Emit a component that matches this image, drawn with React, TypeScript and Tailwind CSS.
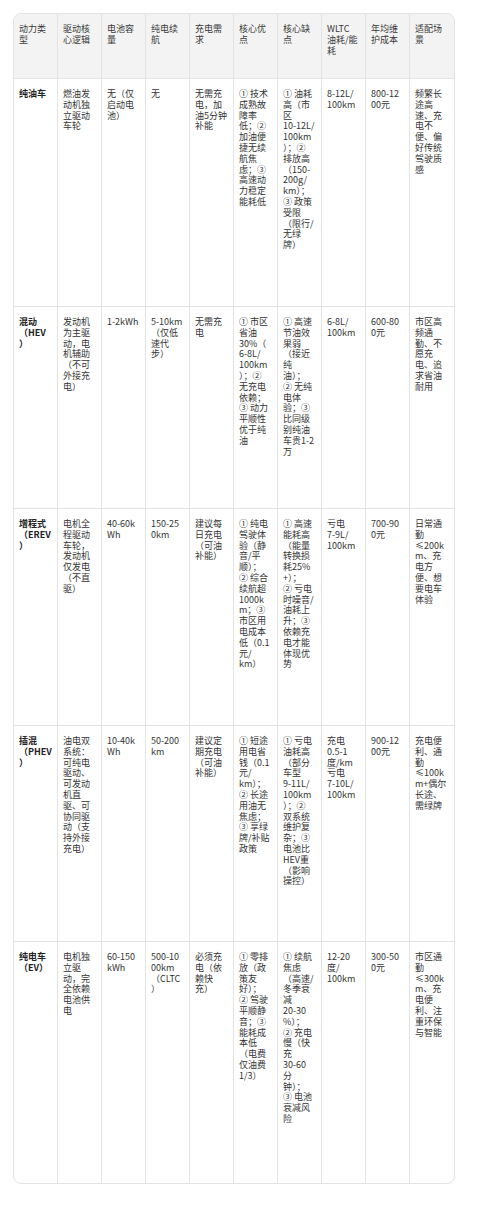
const header: string[][] = [
  ['动力类', '型'],
  ['驱动核', '心逻辑'],
  ['电池容', '量'],
  ['纯电续', '航'],
  ['充电需', '求'],
  ['核心优', '点'],
  ['核心缺', '点'],
  ['WLTC', '油耗/能', '耗'],
  ['年均维', '护成本'],
  ['适配场', '景'],
];

type Row = { h: string; cells: string[][] };

const rows: Row[] = [
  {
    h: 'h-[228px]',
    cells: [
      ['纯油车'],
      ['燃油发', '动机独', '立驱动', '车轮'],
      ['无（仅', '启动电', '池）'],
      ['无'],
      ['无需充', '电，加', '油5分钟', '补能'],
      ['① 技术', '成熟故', '障率', '低；②', '加油便', '捷无续', '航焦', '虑；③', '高速动', '力稳定', '能耗低'],
      ['① 油耗', '高（市', '区', '10-12L/', '100km', '）；②', '排放高', '（150-', '200g/', 'km）；', '③ 政策', '受限', '（限行/', '无绿', '牌）'],
      ['8-12L/', '100km'],
      ['800-12', '00元'],
      ['频繁长', '途高', '速、充', '电不', '便、偏', '好传统', '驾驶质', '感'],
    ],
  },
  {
    h: 'h-[202px]',
    cells: [
      ['混动', '（HEV', '）'],
      ['发动机', '为主驱', '动，电', '机辅助', '（不可', '外接充', '电）'],
      ['1-2kWh'],
      ['5-10km', '（仅低', '速代', '步）'],
      ['无需充', '电'],
      ['① 市区', '省油', '30%（', '6-8L/', '100km', '）；②', '无充电', '依赖；', '③ 动力', '平顺性', '优于纯', '油'],
      ['① 高速', '节油效', '果弱', '（接近', '纯', '油）；', '② 无纯', '电体', '验；③', '比同级', '别纯油', '车贵1-2', '万'],
      ['6-8L/', '100km'],
      ['600-80', '0元'],
      ['市区高', '频通', '勤、不', '愿充', '电、追', '求省油', '耐用'],
    ],
  },
  {
    h: 'h-[217px]',
    cells: [
      ['增程式', '（EREV', '）'],
      ['电机全', '程驱动', '车轮，', '发动机', '仅发电', '（不直', '驱）'],
      ['40-60k', 'Wh'],
      ['150-25', '0km'],
      ['建议每', '日充电', '（可油', '补能）'],
      ['① 纯电', '驾驶体', '验（静', '音/平', '顺）；', '② 综合', '续航超', '1000k', 'm；③', '市区用', '电成本', '低（0.1', '元/', 'km）'],
      ['① 高速', '能耗高', '（能量', '转换损', '耗25%', '+）；', '② 亏电', '时噪音/', '油耗上', '升；③', '依赖充', '电才能', '体现优', '势'],
      ['亏电', '7-9L/', '100km'],
      ['700-90', '0元'],
      ['日常通', '勤', '≤200k', 'm、充', '电方', '便、想', '要电车', '体验'],
    ],
  },
  {
    h: 'h-[216px]',
    cells: [
      ['插混', '（PHEV', '）'],
      ['油电双', '系统：', '可纯电', '驱动、', '可发动', '机直', '驱、可', '协同驱', '动（支', '持外接', '充电）'],
      ['10-40k', 'Wh'],
      ['50-200', 'km'],
      ['建议定', '期充电', '（可油', '补能）'],
      ['① 短途', '用电省', '钱（0.1', '元/', 'km）；', '② 长途', '用油无', '焦虑；', '③ 享绿', '牌/补贴', '政策'],
      ['① 亏电', '油耗高', '（部分', '车型', '9-11L/', '100km', '）；②', '双系统', '维护复', '杂；③', '电池比', 'HEV重', '（影响', '操控）'],
      ['充电', '0.5-1', '度/km', '亏电', '7-10L/', '100km'],
      ['900-12', '00元'],
      ['充电便', '利、通', '勤', '≤100k', 'm+偶尔', '长途、', '需绿牌'],
    ],
  },
  {
    h: 'h-[241px]',
    cells: [
      ['纯电车', '（EV）'],
      ['电机独', '立驱', '动，完', '全依赖', '电池供', '电'],
      ['60-150', 'kWh'],
      ['500-10', '00km', '（CLTC', '）'],
      ['必须充', '电（依', '赖快', '充）'],
      ['① 零排', '放（政', '策友', '好）；', '② 驾驶', '平顺静', '音；③', '能耗成', '本低', '（电费', '仅油费', '1/3）'],
      ['① 续航', '焦虑', '（高速/', '冬季衰', '减', '20-30', '%）；', '② 充电', '慢（快', '充', '30-60', '分', '钟）；', '③ 电池', '衰减风', '险'],
      ['12-20', '度/', '100km'],
      ['300-50', '0元'],
      ['市区通', '勤', '≤300k', 'm、充', '电便', '利、注', '重环保', '与智能'],
    ],
  },
];

function Lines({ lines }: { lines: string[] }) {
  return (
    <>
      {lines.map((l, i) => (
        <div key={i} className="whitespace-nowrap">
          {l}
        </div>
      ))}
    </>
  );
}

export default function App() {
  return (
    <div className="min-h-[1211px] bg-white pt-[13px] pl-[13px] font-['Noto_Sans_CJK_SC','Noto_Sans',sans-serif] text-[9px] leading-[10.8px] text-[#333]">
      <div className="w-[442px] overflow-hidden rounded-[8px] border border-[#e3e3e3]">
        <table className="w-full table-fixed border-separate border-spacing-0">
          <thead>
            <tr className="h-[65px] bg-[#f3f3f3]">
              {header.map((c, i) => (
                <th
                  key={i}
                  className="border-b border-r border-[#e3e3e3] px-[5px] pt-[10px] text-left align-top font-normal text-[#3a3a3a] last:border-r-0"
                >
                  <Lines lines={c} />
                </th>
              ))}
            </tr>
          </thead>
          <tbody>
            {rows.map((r, ri) => (
              <tr key={ri} className={r.h}>
                {r.cells.map((c, ci) => (
                  <td
                    key={ci}
                    className={
                      'border-r border-[#e3e3e3] px-[5px] pt-[10px] align-top last:border-r-0 ' +
                      (ri < rows.length - 1 ? 'border-b ' : '') +
                      (ci === 0 ? 'font-bold text-[#222]' : '')
                    }
                  >
                    <Lines lines={c} />
                  </td>
                ))}
              </tr>
            ))}
          </tbody>
        </table>
      </div>
    </div>
  );
}
